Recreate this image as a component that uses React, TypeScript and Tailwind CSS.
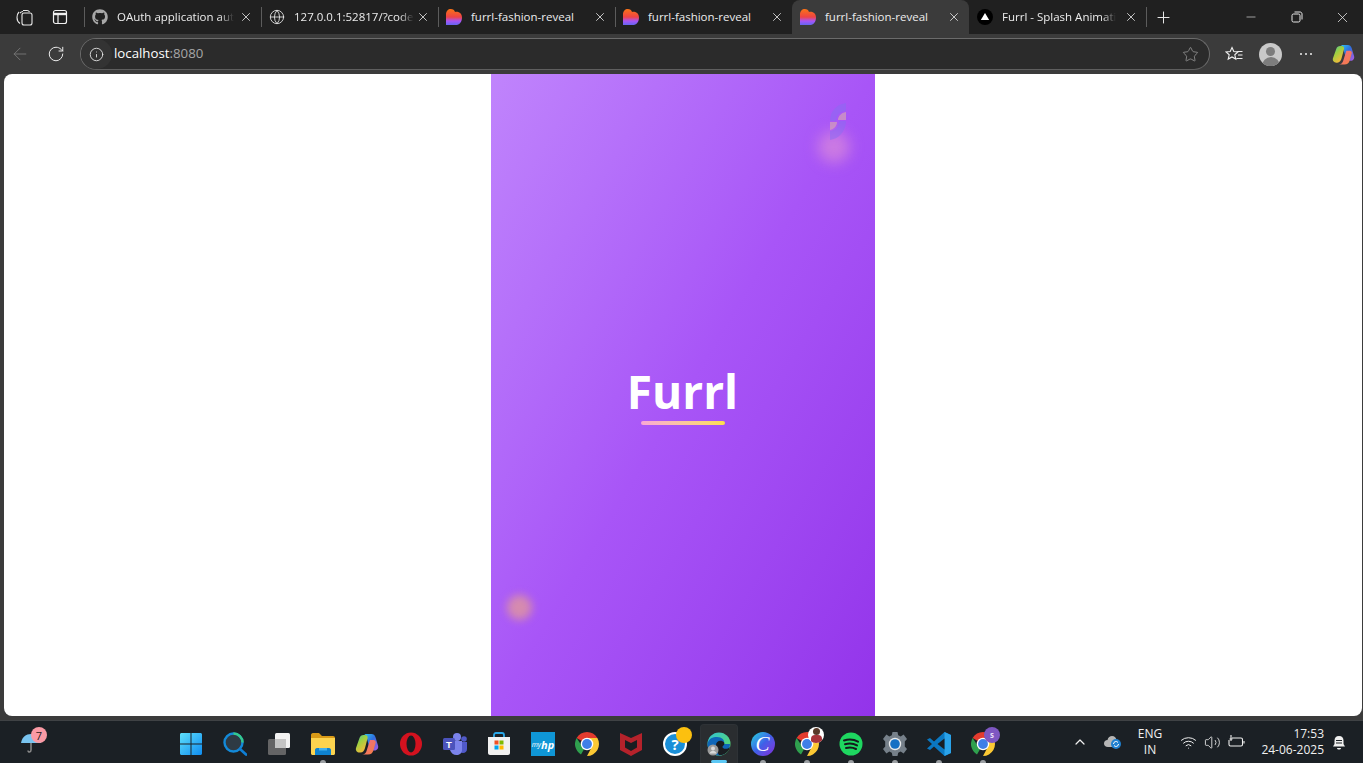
import React from 'react';
import { FaGithub } from 'react-icons/fa';
import { ArrowLeft, ChevronUp, Globe, Info, Minus, Plus, RotateCw, Star, Volume2, Wifi, X } from 'lucide-react';

const uiFont = "font-['Open_Sans','Noto_Sans',sans-serif]";

function HeartIcon() {
  return (
    <svg width="18" height="18" viewBox="0 0 18 18" className="shrink-0">
      <defs>
        <linearGradient id="heart" x1="0" y1="0" x2="0" y2="1">
          <stop offset="0" stopColor="#f97316" />
          <stop offset="0.5" stopColor="#ef4444" />
          <stop offset="0.75" stopColor="#a855f7" />
          <stop offset="1" stopColor="#6366f1" />
        </linearGradient>
      </defs>
      <path d="M1 17V6.500C1 3 3.200 1 5.800 1 8 1 9.600 2.200 10 4c2-.8 7 .2 7 5.600 0 3.600-2 7.400-5.400 7.400H1z" fill="url(#heart)" />
    </svg>
  );
}

function VercelIcon() {
  return (
    <svg width="16" height="16" viewBox="0 0 16 16" className="shrink-0">
      <circle cx="8" cy="8" r="8" fill="#000" />
      <path d="M8 4l4.200 7H3.800z" fill="#fff" />
    </svg>
  );
}

function Tab({ icon, title, active, noSep, fade }: { icon: React.ReactNode; title: string; active?: boolean; noSep?: boolean; fade?: boolean }) {
  return (
    <div className={`relative flex h-[34px] w-[177px] shrink-0 items-center pl-[7px] pr-[8px] ${active ? 'rounded-t-[8px] bg-[#3b3b3b]' : ''}`}>
      {!noSep && <div className="absolute left-0 top-[7px] h-[20px] w-px bg-[#5c5c5c]" />}
      <div className="flex w-[18px] justify-center">{icon}</div>
      <div className={`mb-[1px] ml-[8px] whitespace-nowrap text-[11.500px] text-[#ececec] ${fade ? '[mask-image:linear-gradient(to_right,black_88%,transparent)]' : ''}`}>{title}</div>
      <X size={14} strokeWidth={1.400} className="ml-auto shrink-0 text-[#e8e8e8]" />
    </div>
  );
}

function CopilotIcon({ size }: { size: number }) {
  return (
    <svg width={size} height={size} viewBox="0 0 24 24">
      <defs>
        <linearGradient id={`cpa${size}`} x1="0" y1="0" x2="1" y2="1">
          <stop offset="0" stopColor="#2ec5f0" />
          <stop offset="0.45" stopColor="#2f6fe0" />
          <stop offset="1" stopColor="#b45ae0" />
        </linearGradient>
        <linearGradient id={`cpb${size}`} x1="0" y1="0" x2="0.6" y2="1">
          <stop offset="0" stopColor="#3fc8a8" />
          <stop offset="0.45" stopColor="#9fd040" />
          <stop offset="1" stopColor="#f8b83a" />
        </linearGradient>
        <linearGradient id={`cpc${size}`} x1="0" y1="0" x2="1" y2="1">
          <stop offset="0" stopColor="#f06a90" />
          <stop offset="1" stopColor="#f6803c" />
        </linearGradient>
      </defs>
      <path d="M9 2h7.500c2 0 3.300 1.200 3.900 3L23 13.500c.8 2.500-.8 5-3.500 5H15L12 6.500C11.500 4 10.500 2.500 9 2z" fill={`url(#cpa${size})`} />
      <path d="M8.500 3h1.700c1.800 0 2.800 1.500 2.300 3.500L10 16c-.7 2.600-2 4.500-4.500 4.500h-1C2 20.500.3 18.500 1 16L4.500 6C5.200 4 6.500 3 8.500 3z" fill={`url(#cpb${size})`} />
      <path d="M15 8h3.500c1.500 0 2.500 1 2.200 2.500L18.500 18c-.8 3-2.500 4.500-5.500 4.500H7c2.500 0 4-1.500 4.700-4z" fill={`url(#cpc${size})`} />
    </svg>
  );
}

function Chrome() {
  return (
    <svg width="24" height="24" viewBox="2 2 20 20">
      <path d="M12 12L3.340 7A10 10 0 0 1 20.660 7H12z" fill="#e33b2e" />
      <path d="M12 12l-5 8.660A10 10 0 0 1 3.340 7L8 14z" fill="#2fa04e" />
      <path d="M12 7h8.660A10 10 0 0 1 12 22l4-7.500z" fill="#fcc934" />
      <circle cx="12" cy="12" r="5.200" fill="#fff" />
      <circle cx="12" cy="12" r="4.100" fill="#3f7fe8" />
    </svg>
  );
}

function StartIcon() {
  return (
    <svg width="24" height="24" viewBox="0 0 24 24">
      <defs>
        <linearGradient id="win" x1="0" y1="0" x2="1" y2="1">
          <stop offset="0" stopColor="#5fe0fb" />
          <stop offset="1" stopColor="#0f8cf0" />
        </linearGradient>
      </defs>
      <path d="M1 2.500C1 1.700 1.700 1 2.500 1h9v10.500H1zM12.500 1h9c.8 0 1.500.7 1.500 1.500v9H12.500zM1 12.500h10.500V23h-9C1.700 23 1 22.300 1 21.500zM12.500 12.500H23v9c0 .8-.7 1.500-1.500 1.500h-9z" fill="url(#win)" />
    </svg>
  );
}

function SearchIcon() {
  return (
    <svg width="24" height="24" viewBox="0 0 24 24">
      <circle cx="10.500" cy="10.500" r="9" fill="#2e3a44" stroke="#1389d8" strokeWidth="2.400" />
      <path d="M10.500 1.500a9 9 0 0 1 9 9" fill="none" stroke="#35c98c" strokeWidth="2.400" />
      <path d="M17 17l6 5.500" stroke="#0f7fd6" strokeWidth="2.600" strokeLinecap="round" />
    </svg>
  );
}

function TaskViewIcon() {
  return (
    <svg width="24" height="24" viewBox="0 0 24 24">
      <rect x="8" y="1" width="15" height="15" rx="1.500" fill="#f2f2f2" />
      <rect x="1" y="7" width="18" height="16" rx="1.500" fill="#6a6a6a" fillOpacity="0.92" />
      <rect x="8" y="7" width="11" height="9" fill="#c4c4c4" />
    </svg>
  );
}

function FolderIcon() {
  return (
    <svg width="24" height="22" viewBox="0 0 24 22">
      <path d="M0 2c0-1 .6-2 2-2h6l3 3h11c1.200 0 2 .8 2 2v2H0z" fill="#d99a17" />
      <path d="M0 5h24v15.500c0 .8-.7 1.500-1.500 1.500h-21C.7 22 0 21.300 0 20.500z" fill="#fcd34f" />
      <path d="M4 22v-5c0-1 .7-2 2-2h12c1.300 0 2 1 2 2v5z" fill="#0e82cf" />
      <rect x="8" y="15" width="8" height="2.500" fill="#40b0ee" />
    </svg>
  );
}

function OperaIcon() {
  return (
    <svg width="24" height="24" viewBox="0 0 24 24">
      <ellipse cx="12" cy="12" rx="11" ry="11.500" fill="#d3121f" />
      <ellipse cx="12" cy="12" rx="4.500" ry="8.500" fill="#1a1d21" />
    </svg>
  );
}

function TeamsIcon() {
  return (
    <svg width="26" height="24" viewBox="0 0 26 24">
      <circle cx="15" cy="5" r="4" fill="#7b83eb" />
      <circle cx="22" cy="7" r="2.800" fill="#5059c9" />
      <path d="M18 10h7v7c0 2.500-2 4-4 4-1 0-2-.3-3-1z" fill="#5059c9" />
      <path d="M8 9h12v9c0 3-2.500 5-5.500 5S9 21 8 18z" fill="#7b83eb" />
      <rect x="1" y="6" width="12" height="12" rx="1.500" fill="#4b53bc" />
      <text x="7" y="15.500" textAnchor="middle" fontSize="9.500" fontWeight="700" fill="#fff" fontFamily="'Liberation Sans',sans-serif">T</text>
    </svg>
  );
}

function StoreIcon() {
  return (
    <svg width="24" height="24" viewBox="0 0 24 24">
      <path d="M7 6V3c0-1 .7-2 2-2h6c1.300 0 2 1 2 2v3" fill="none" stroke="#29a7e8" strokeWidth="1.800" />
      <path d="M1 5h22v16c0 1.200-1 2-2 2H3c-1 0-2-.8-2-2z" fill="#f1f1f1" />
      <rect x="7.500" y="8.500" width="4" height="4" fill="#f25022" />
      <rect x="12.500" y="8.500" width="4" height="4" fill="#7fba00" />
      <rect x="7.500" y="13.500" width="4" height="4" fill="#00a4ef" />
      <rect x="12.500" y="13.500" width="4" height="4" fill="#ffb900" />
    </svg>
  );
}

function MyHpIcon() {
  return (
    <div className="flex h-[24px] w-[24px] items-center justify-center bg-[#0f96d6] font-bold italic leading-none text-white">
      <span className="text-[7px] font-normal">my</span>
      <span className="text-[11px]">hp</span>
    </div>
  );
}

function McAfeeIcon() {
  return (
    <svg width="22" height="24" viewBox="0 0 22 24">
      <path d="M0 1l11 5 11-5v17l-11 6-11-6z" fill="#b5222b" />
      <path d="M5 8l6 3 6-3v7.500l-6 3.500-6-3.500z" fill="#1a1d21" />
    </svg>
  );
}

function HelpIcon() {
  return (
    <div className="relative h-[24px] w-[24px]">
      <div className="flex h-[24px] w-[24px] items-center justify-center rounded-full border-2 border-white bg-[#1a8fd8] text-[15px] font-bold leading-none text-white">?</div>
      <div className="absolute left-[13px] top-[-5px] h-[16px] w-[16px] rounded-full bg-[#fcc00f]" />
    </div>
  );
}

function EdgeIcon() {
  return (
    <svg width="24" height="24" viewBox="0 0 24 24">
      <defs>
        <linearGradient id="edge" x1="0" y1="0" x2="1" y2="1">
          <stop offset="0" stopColor="#31c3d6" />
          <stop offset="1" stopColor="#5fdc5a" />
        </linearGradient>
      </defs>
      <circle cx="12" cy="12" r="11.500" fill="url(#edge)" />
      <path d="M.5 12C1.500 6 6 5 10 5c5 0 8 3 7 7h6c0 6-5 11.500-11 11.500C6 23.500.5 18 .5 12z" fill="#0f66b8" />
      <path d="M9 13c0-3 3-5 6-4 2 .7 3 2 2 4-1.500 1-2 2-1 3 2 1.500 5 1 7-1-1 5-6 8.500-11 8-2-3-3-6-3-10z" fill="#1a1d21" />
      <circle cx="6" cy="18" r="5.500" fill="#9a9a9a" />
      <circle cx="6" cy="16.500" r="2" fill="#d9d9d9" />
      <path d="M2.500 21.500c.5-2 2-2.800 3.500-2.800s3 .8 3.500 2.800z" fill="#d9d9d9" />
    </svg>
  );
}

function CanvaIcon() {
  return (
    <div className="flex h-[24px] w-[24px] items-center justify-center rounded-full bg-gradient-to-br from-[#22d3d8] via-[#3f5fe8] to-[#7c22d8] pr-px font-['Liberation_Serif',serif] text-[21px] italic leading-none text-white">
      C
    </div>
  );
}

function SpotifyIcon() {
  return (
    <svg width="24" height="24" viewBox="0 0 24 24">
      <circle cx="12" cy="12" r="11.500" fill="#1ed760" />
      <path d="M5 8.500c4.500-1.300 10-1 14 1.200M6 12.300c4-1.100 8.500-.8 12 1.100M7 16c3.300-.8 7-.6 10 1" fill="none" stroke="#15191d" strokeWidth="2" strokeLinecap="round" />
    </svg>
  );
}

function GearIcon() {
  return (
    <svg width="24" height="24" viewBox="0 0 24 24">
      <path d="M9.500 0h5l.7 3.300 2.500 1.100L20.600 2.500 24 7l-2.200 2.500v5L24 17l-3.400 4.500-2.900-1.900-2.500 1.100-.7 3.300h-5l-.7-3.300-2.500-1.100-2.900 1.900L0 17l2.200-2.500v-5L0 7l3.400-4.500 2.900 1.900 2.500-1.100z" fill="#76808a" />
      <circle cx="12" cy="12" r="6.200" fill="#e8eaec" />
      <circle cx="12" cy="12" r="4.800" fill="#1570c4" />
    </svg>
  );
}

function VsCodeIcon() {
  return (
    <svg width="24" height="24" viewBox="0 0 24 24">
      <path d="M17.500 0L24 3v18l-6.500 3L7 14.500l-4 3.500-3-1.500 5-4.500-5-4.500L3 6l4 3.500z" fill="#0b78c2" />
      <path d="M17.500 0L24 3v18l-6.500 3z" fill="#2aa3ea" />
      <path d="M17.500 6.500L10.500 12l7 5.500z" fill="#1a1d21" />
    </svg>
  );
}

type Pin = { icon: React.ReactNode; mark?: 'dot' | 'bar'; active?: boolean };

const pins: Pin[] = [
  { icon: <StartIcon /> },
  { icon: <SearchIcon /> },
  { icon: <TaskViewIcon /> },
  { icon: <FolderIcon />, mark: 'dot' },
  { icon: <CopilotIcon size={24} /> },
  { icon: <OperaIcon /> },
  { icon: <TeamsIcon /> },
  { icon: <StoreIcon /> },
  { icon: <MyHpIcon /> },
  { icon: <Chrome /> },
  { icon: <McAfeeIcon /> },
  { icon: <HelpIcon /> },
  { icon: <EdgeIcon />, mark: 'bar', active: true },
  { icon: <CanvaIcon />, mark: 'dot' },
  {
    icon: (
      <div className="relative">
        <Chrome />
        <div className="absolute left-[13px] top-[-5px] h-[16px] w-[16px] overflow-hidden rounded-full bg-white">
          <div className="mx-auto mt-[1px] h-[7px] w-[7px] rounded-full bg-[#5a3a2a]" />
          <div className="mx-auto h-[8px] w-[11px] rounded-t-[4px] bg-[#a8343a]" />
        </div>
      </div>
    ),
    mark: 'dot',
  },
  { icon: <SpotifyIcon />, mark: 'dot' },
  { icon: <GearIcon />, mark: 'dot' },
  { icon: <VsCodeIcon />, mark: 'dot' },
  {
    icon: (
      <div className="relative">
        <Chrome />
        <div className="absolute left-[13px] top-[-5px] flex h-[16px] w-[16px] items-center justify-center rounded-full bg-[#7e57c2] text-[8px] font-bold leading-none text-[#e6dcf5]">s</div>
      </div>
    ),
    mark: 'dot',
  },
];

function TaskbarPin({ pin }: { pin: Pin }) {
  return (
    <div className="relative flex h-[42px] w-[44px] shrink-0 items-center justify-center pt-[4px]">
      {pin.active && <div className="absolute bottom-0 left-[3px] right-[3px] top-[3px] rounded-t-[4px] border border-b-0 border-[#2e3236] bg-[#2a2d30]" />}
      <div className="relative">{pin.icon}</div>
      {pin.mark === 'dot' && <div className="absolute bottom-0 left-[19px] h-[3px] w-[6px] rounded-t-full bg-[#9a9ea2]" />}
      {pin.mark === 'bar' && <div className="absolute bottom-0 left-[14px] h-[3px] w-[16px] rounded-full bg-[#5cc8f5]" />}
    </div>
  );
}

export default function App() {
  return (
    <div className={`flex h-screen w-full flex-col overflow-hidden bg-[#3b3b3b] ${uiFont}`}>
      {/* tab strip */}
      <div className="flex h-[34px] shrink-0 items-center bg-[#202020]">
        <div className="flex w-[84px] shrink-0 items-center pl-[16px]">
          <svg width="17" height="17" viewBox="0 0 17 17" fill="none" stroke="#e8e8e8" strokeWidth="1.100">
            <rect x="6" y="4" width="10" height="12" rx="2" />
            <path d="M4 14.500C2.500 13.500 1 11 1 8.500 1 6 2 4 3 3M7 1.500h4c1 0 2 .5 2.500 1.500M4 4c1-1 2-1.500 3-1.500" />
          </svg>
          <svg width="16" height="16" viewBox="0 0 16 16" fill="none" stroke="#f0f0f0" strokeWidth="1.200" className="ml-[19px]">
            <rect x="1.500" y="1.500" width="13" height="13" rx="2" />
            <path d="M1.500 5h13" strokeWidth="2.400" />
            <path d="M6 5v9.500" />
          </svg>
        </div>
        <Tab icon={<FaGithub size={16} className="text-[#a8a8a8]" />} title="OAuth application aut" fade />
        <Tab icon={<Globe size={16} strokeWidth={1.300} className="text-[#e8e8e8]" />} title="127.0.0.1:52817/?code" fade />
        <Tab icon={<HeartIcon />} title="furrl-fashion-reveal" />
        <Tab icon={<HeartIcon />} title="furrl-fashion-reveal" />
        <Tab icon={<HeartIcon />} title="furrl-fashion-reveal" active noSep />
        <Tab icon={<VercelIcon />} title="Furrl - Splash Animati" noSep fade />
        <div className="flex h-[20px] items-center border-l border-[#5c5c5c] pl-[7px]">
          <Plus size={19} strokeWidth={1.200} className="text-[#f0f0f0]" />
        </div>
        <div className="ml-auto flex items-center text-[#e8e8e8]">
          <Minus size={14} strokeWidth={1.100} className="mr-[33px]" />
          <svg width="12" height="12" viewBox="0 0 12 12" fill="none" stroke="#e8e8e8" className="mr-[31px]">
            <rect x="1" y="3" width="8" height="8" rx="1.500" />
            <path d="M3.500 1h5.500c1.200 0 2 .8 2 2v5.500" />
          </svg>
          <X size={17} strokeWidth={1.100} className="mr-[12px]" />
        </div>
      </div>

      {/* toolbar */}
      <div className="flex h-[40px] shrink-0 items-center">
        <ArrowLeft size={20} strokeWidth={1.100} className="ml-[10px] text-[#777]" />
        <RotateCw size={18} strokeWidth={1.300} className="ml-[17px] text-[#f0f0f0]" />
        <div className="ml-[15px] flex h-[32px] w-[1130px] items-center rounded-full border border-[#6b6b6b] border-b-[#5f5f5f] bg-[#2b2b2b]">
          <div className="flex h-[30px] w-[31px] items-center justify-center rounded-full bg-[#333]">
            <Info size={15} strokeWidth={1.400} className="text-[#e8e8e8]" />
          </div>
          <div className="ml-[2px] text-[13.250px] text-white">
            localhost<span className="text-[#a6a6a6]">:8080</span>
          </div>
          <Star size={17} strokeWidth={1.100} className="ml-auto mr-[10px] text-[#9a9a9a]" />
        </div>
        <svg width="18" height="17" viewBox="0 0 18 17" fill="none" stroke="#f0f0f0" strokeWidth="1.100" className="ml-[15px]">
          <path d="M7 1.500l1.800 4 4.200.4-3.200 2.900 1 4.300L7 10.900l-3.800 2.200 1-4.300L1 5.900l4.200-.4zM12.500 5.500h5M13 9h4.500M11.500 12.500h6" />
        </svg>
        <div className="relative ml-[16px] h-[23px] w-[23px] overflow-hidden rounded-full bg-[#c9c9c9]">
          <div className="mx-auto mt-[4px] h-[9px] w-[9px] rounded-full bg-[#7d7d7d]" />
          <div className="mx-auto mt-[1px] h-[10px] w-[18px] rounded-t-full bg-[#7d7d7d]" />
        </div>
        <div className="ml-[18px] flex gap-[3px]">
          <div className="h-[2px] w-[2px] rounded-full bg-[#f0f0f0]" />
          <div className="h-[2px] w-[2px] rounded-full bg-[#f0f0f0]" />
          <div className="h-[2px] w-[2px] rounded-full bg-[#f0f0f0]" />
        </div>
        <div className="ml-[20px]">
          <CopilotIcon size={23} />
        </div>
      </div>

      {/* page */}
      <div className="shrink-0 pl-[4px] pr-px">
        <div className="flex h-[642px] justify-center overflow-hidden rounded-[8px] bg-white">
          <div className="relative ml-[-1px] flex w-[384px] flex-col items-center justify-center overflow-hidden bg-gradient-to-br from-[#c084fc] via-[#a855f7] to-[#9333ea]">
            <div className="absolute left-[327px] top-[57px] h-[32px] w-[32px] rounded-full bg-[#f0a0d0]/50 blur-[7px]" />
            <div className="absolute left-[16px] top-[521px] h-[25px] w-[25px] rounded-full bg-[#e8a090]/70 blur-[4px]" />
            <svg width="17" height="38" viewBox="0 0 17 38" className="absolute left-[339px] top-[29px] opacity-70 blur-[0.5px]">
              <path d="M16 0V8C9 9 6 13 6 18H0C0 8 7 1 16 0Z" fill="#8a6cf0" fillOpacity="0.75" />
              <path d="M16 9V17H8C8 13 11 10 16 9Z" fill="#d8a8b0" fillOpacity="0.9" />
              <path d="M0 19H7C7 23 4 26 0 27Z" fill="#d8a8b0" fillOpacity="0.9" />
              <path d="M16 18C16 29 8 36 0 37V28C6 27 9 23 9 18Z" fill="#8a6cf0" fillOpacity="0.75" />
            </svg>
            <div className="mt-[-2px] text-[46px] font-bold leading-[56px] text-white">Furrl</div>
            <div className="mt-[2px] h-[4px] w-[84px] rounded-full bg-gradient-to-r from-[#f9a8d4] to-[#fde047]" />
          </div>
        </div>
      </div>

      {/* taskbar */}
      <div className="mt-[4px] h-px shrink-0 bg-[#3f4245]" />
      <div className="flex h-[42px] shrink-0 items-start bg-[#1b2025] text-white">
        <div className="relative w-[169px] shrink-0">
          <svg width="22" height="22" viewBox="0 0 22 22" className="absolute left-[20px] top-[10px]">
            <path d="M1 12C2 6 6 3 11 3s9 3 10 9z" fill="#79c4f0" />
            <path d="M11 12v7c0 2.500-3 2.500-3 .5" fill="none" stroke="#8a8a8a" strokeWidth="1.500" />
          </svg>
          <div className="absolute left-[31px] top-[6px] flex h-[16px] w-[16px] items-center justify-center rounded-full bg-[#fa9aa5] text-[11px] leading-none text-[#2a1a1a]">7</div>
        </div>
        {pins.map((pin, i) => (
          <TaskbarPin key={i} pin={pin} />
        ))}
        <div className="flex h-[42px] flex-1 items-center">
          <ChevronUp size={16} strokeWidth={1.800} className="ml-[67px] text-[#f0f0f0]" />
          <svg width="18" height="14" viewBox="0 0 18 14" className="ml-[16px]">
            <path d="M4 12C1.500 12 0 10.500 0 8.500S1.500 5 3.500 5C4 2.500 6 1 8 1c2.500 0 4.500 2 4.500 4.500V12z" fill="#b5b5b5" />
            <circle cx="12" cy="9" r="5" fill="#1f80d0" />
            <path d="M9.500 9a2.500 2.500 0 0 1 4.500-1.500M14.500 9a2.500 2.500 0 0 1-4.500 1.500" fill="none" stroke="#fff" />
          </svg>
          <div className="ml-[5px] w-[46px] text-center text-[12px] leading-[16px] text-[#f0f0f0]">
            <div>ENG</div>
            <div>IN</div>
          </div>
          <Wifi size={17} strokeWidth={1.400} className="ml-[7px] text-[#f0f0f0]" />
          <Volume2 size={17} strokeWidth={1.200} className="ml-[7px] text-[#f0f0f0]" />
          <svg width="17" height="14" viewBox="0 0 17 14" fill="none" stroke="#f0f0f0" strokeWidth="1.100" className="ml-[7px]">
            <path d="M4 3h9c1 0 1.500.5 1.500 1.500v5c0 1-.5 1.500-1.500 1.500H2.500c-1 0-1.500-.5-1.500-1.500V5M16 6v2.500" />
            <path d="M3 0v6M1.500 4h3" />
          </svg>
          <div className="ml-[15px] w-[64px] whitespace-nowrap text-right text-[12px] leading-[16px] text-[#f0f0f0]">
            <div>17:53</div>
            <div>24-06-2025</div>
          </div>
          <svg width="14" height="16" viewBox="0 0 14 16" className="ml-[8px]">
            <path d="M7 2c3 0 4.500 2 4.500 4.500V10l1.500 2.500H1L2.500 10V6.500C2.500 4 4 2 7 2z" fill="#f0f0f0" />
            <path d="M5 14h4c0 1-1 1.500-2 1.500S5 15 5 14z" fill="#f0f0f0" />
            <path d="M4 6.500h6M4 9h6" stroke="#1b2025" />
          </svg>
        </div>
      </div>
    </div>
  );
}
